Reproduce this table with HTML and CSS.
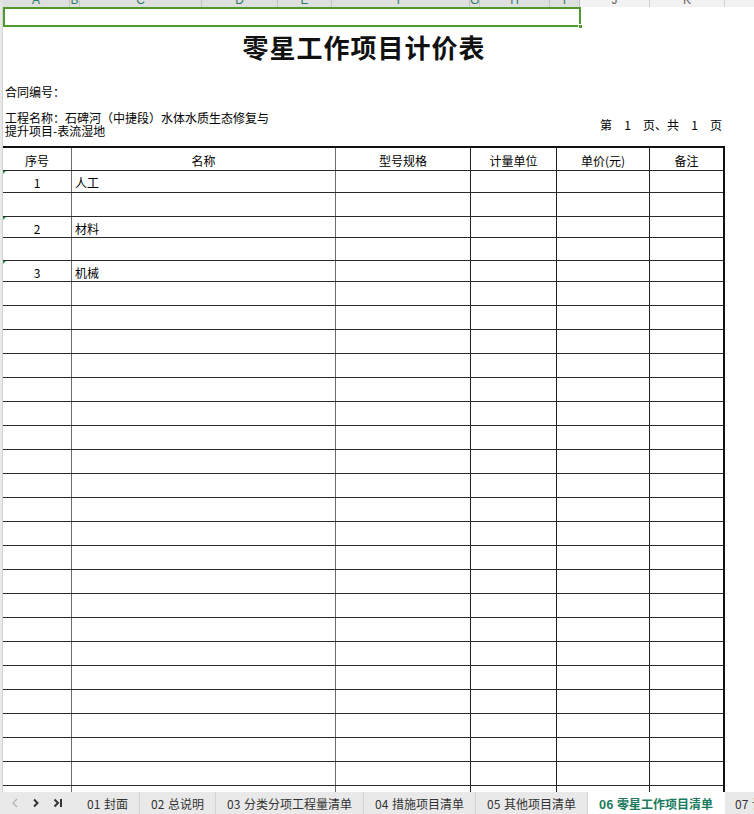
FILE: index.html
```html
<!DOCTYPE html>
<html lang="zh-CN">
<head>
<meta charset="utf-8">
<title>零星工作项目计价表</title>
<link rel="stylesheet" href="styles.css">
</head>
<body>
<div class="colhdr">
  <div class="corner"></div>
  <div class="ch sel c-a"><span>A</span></div>
  <div class="ch sel c-b"><span>B</span></div>
  <div class="ch sel c-c"><span>C</span></div>
  <div class="ch sel c-d"><span>D</span></div>
  <div class="ch sel c-e"><span>E</span></div>
  <div class="ch sel c-f"><span>F</span></div>
  <div class="ch sel c-g"><span>G</span></div>
  <div class="ch sel c-h"><span>H</span></div>
  <div class="ch sel c-i"><span>I</span></div>
  <div class="ch c-j"><span>J</span></div>
  <div class="ch c-k"><span>K</span></div>
  <div class="ch c-l"><span>L</span></div>
</div>
<div class="sheet">
  <div class="rowhdr"></div>
  <div class="page">
    <div class="selrow"><div class="selbox"><span class="handle"></span></div></div>
    <h1 class="title">零星工作项目计价表</h1>
    <div class="contract">合同编号：</div>
    <div class="proj">
      <div class="projname">工程名称：石碑河（中捷段）水体水质生态修复与<br>提升项目-表流湿地</div>
      <div class="pageno">第<span class="pn">1</span>页、共<span class="pn">1</span>页</div>
    </div>
    <div class="grid">
      <div class="row hdr h23"><div class="cell c1 ctr">序号</div><div class="cell c2 ctr">名称</div><div class="cell ctr">型号规格</div><div class="cell ctr">计量单位</div><div class="cell ctr">单价(元)</div><div class="cell ctr last">备注</div></div>
      <div class="row h22"><div class="cell c1 ctr mark">1</div><div class="cell c2 txt">人工</div><div class="cell"></div><div class="cell"></div><div class="cell"></div><div class="cell last"></div></div>
      <div class="row h24"><div class="cell c1"></div><div class="cell c2"></div><div class="cell"></div><div class="cell"></div><div class="cell"></div><div class="cell last"></div></div>
      <div class="row h21"><div class="cell c1 ctr mark">2</div><div class="cell c2 txt">材料</div><div class="cell"></div><div class="cell"></div><div class="cell"></div><div class="cell last"></div></div>
      <div class="row h23"><div class="cell c1"></div><div class="cell c2"></div><div class="cell"></div><div class="cell"></div><div class="cell"></div><div class="cell last"></div></div>
      <div class="row h21"><div class="cell c1 ctr mark">3</div><div class="cell c2 txt">机械</div><div class="cell"></div><div class="cell"></div><div class="cell"></div><div class="cell last"></div></div>
      <div class="row h24"><div class="cell c1"></div><div class="cell c2"></div><div class="cell"></div><div class="cell"></div><div class="cell"></div><div class="cell last"></div></div>
      <div class="row h24"><div class="cell c1"></div><div class="cell c2"></div><div class="cell"></div><div class="cell"></div><div class="cell"></div><div class="cell last"></div></div>
      <div class="row h24"><div class="cell c1"></div><div class="cell c2"></div><div class="cell"></div><div class="cell"></div><div class="cell"></div><div class="cell last"></div></div>
      <div class="row h24"><div class="cell c1"></div><div class="cell c2"></div><div class="cell"></div><div class="cell"></div><div class="cell"></div><div class="cell last"></div></div>
      <div class="row h24"><div class="cell c1"></div><div class="cell c2"></div><div class="cell"></div><div class="cell"></div><div class="cell"></div><div class="cell last"></div></div>
      <div class="row h24"><div class="cell c1"></div><div class="cell c2"></div><div class="cell"></div><div class="cell"></div><div class="cell"></div><div class="cell last"></div></div>
      <div class="row h24"><div class="cell c1"></div><div class="cell c2"></div><div class="cell"></div><div class="cell"></div><div class="cell"></div><div class="cell last"></div></div>
      <div class="row h24"><div class="cell c1"></div><div class="cell c2"></div><div class="cell"></div><div class="cell"></div><div class="cell"></div><div class="cell last"></div></div>
      <div class="row h24"><div class="cell c1"></div><div class="cell c2"></div><div class="cell"></div><div class="cell"></div><div class="cell"></div><div class="cell last"></div></div>
      <div class="row h24"><div class="cell c1"></div><div class="cell c2"></div><div class="cell"></div><div class="cell"></div><div class="cell"></div><div class="cell last"></div></div>
      <div class="row h24"><div class="cell c1"></div><div class="cell c2"></div><div class="cell"></div><div class="cell"></div><div class="cell"></div><div class="cell last"></div></div>
      <div class="row h24"><div class="cell c1"></div><div class="cell c2"></div><div class="cell"></div><div class="cell"></div><div class="cell"></div><div class="cell last"></div></div>
      <div class="row h24"><div class="cell c1"></div><div class="cell c2"></div><div class="cell"></div><div class="cell"></div><div class="cell"></div><div class="cell last"></div></div>
      <div class="row h24"><div class="cell c1"></div><div class="cell c2"></div><div class="cell"></div><div class="cell"></div><div class="cell"></div><div class="cell last"></div></div>
      <div class="row h24"><div class="cell c1"></div><div class="cell c2"></div><div class="cell"></div><div class="cell"></div><div class="cell"></div><div class="cell last"></div></div>
      <div class="row h24"><div class="cell c1"></div><div class="cell c2"></div><div class="cell"></div><div class="cell"></div><div class="cell"></div><div class="cell last"></div></div>
      <div class="row h24"><div class="cell c1"></div><div class="cell c2"></div><div class="cell"></div><div class="cell"></div><div class="cell"></div><div class="cell last"></div></div>
      <div class="row h24"><div class="cell c1"></div><div class="cell c2"></div><div class="cell"></div><div class="cell"></div><div class="cell"></div><div class="cell last"></div></div>
      <div class="row h24"><div class="cell c1"></div><div class="cell c2"></div><div class="cell"></div><div class="cell"></div><div class="cell"></div><div class="cell last"></div></div>
      <div class="row h24"><div class="cell c1"></div><div class="cell c2"></div><div class="cell"></div><div class="cell"></div><div class="cell"></div><div class="cell last"></div></div>
      <div class="row h24"><div class="cell c1"></div><div class="cell c2"></div><div class="cell"></div><div class="cell"></div><div class="cell"></div><div class="cell last"></div></div>
      <div class="row h24"><div class="cell c1"></div><div class="cell c2"></div><div class="cell"></div><div class="cell"></div><div class="cell"></div><div class="cell last"></div></div>
    </div>
  </div>
</div>
<div class="tabs">
  <div class="nav">
    <svg class="ico dis" width="8" height="10" viewBox="0 0 8 10"><path d="M6 1 L2 5 L6 9" fill="none" stroke="currentColor" stroke-width="1.4"/></svg>
    <svg class="ico" width="8" height="10" viewBox="0 0 8 10"><path d="M2 1.5 L5.5 5 L2 8.5" fill="none" stroke="currentColor" stroke-width="2"/></svg>
    <svg class="ico" width="10" height="10" viewBox="0 0 10 10"><path d="M1.5 1.5 L5 5 L1.5 8.5" fill="none" stroke="currentColor" stroke-width="2"/><path d="M8 1 V9" stroke="currentColor" stroke-width="2"/></svg>
  </div>
  <div class="tab">01 封面</div>
  <div class="tab">02 总说明</div>
  <div class="tab">03 分类分项工程量清单</div>
  <div class="tab">04 措施项目清单</div>
  <div class="tab">05 其他项目清单</div>
  <div class="tab active">06 零星工作项目清单</div>
  <div class="tab next">07 计日工表</div>
</div>
</body>
</html>
```

FILE: styles.css
```css
* { box-sizing: border-box; }
html, body { margin: 0; padding: 0; }
body {
  width: 754px;
  height: 814px;
  overflow: hidden;
  background: #fff;
  font-family: "Noto Sans CJK SC", "Liberation Sans", sans-serif;
  font-size: 12px;
  color: #000;
}

/* column header strip */
.colhdr {
  display: flex;
  height: 7px;
  overflow: hidden;
  background: #f0f0f0;
}
.corner { width: 3px; flex: none; background: #e4e4e4; }
.ch {
  flex: none;
  height: 7px;
  border-right: 1px solid #d2d2d2;
  background: #f2f2f2;
  color: #666;
  font-family: "Liberation Sans", sans-serif;
  font-size: 12px;
  text-align: center;
}
.ch span { display: block; line-height: 14px; margin-top: -7px; }
.ch.sel { background: #dfdfdf; color: #2b7c6b; border-right-color: #c4c4c4; }
.c-a { width: 67px; }
.c-b { width: 10px; }
.c-c { width: 122px; }
.c-d { width: 76px; }
.c-e { width: 54px; }
.c-f { width: 138px; }
.c-g { width: 10px; }
.c-h { width: 70px; }
.c-i { width: 30px; }
.c-j { width: 70px; }
.c-k { width: 75px; }
.c-l { width: 70px; }

/* sheet body */
.sheet {
  display: flex;
  height: 785px;
  overflow: hidden;
}
.rowhdr {
  width: 3px;
  flex: none;
  background: #e9e9e9;
  border-right: 1px solid #d3d3d3;
}
.page {
  width: 722px;
  flex: none;
}

.selrow { height: 20px; }
.selbox {
  position: relative;
  width: 578px;
  height: 20px;
  border: 2px solid #4e9a2c;
}
.handle {
  position: absolute;
  right: -4px;
  bottom: -4px;
  width: 5px;
  height: 5px;
  background: #4e9a2c;
  border: 1px solid #fff;
}

.title {
  margin: 0;
  height: 40px;
  line-height: 40px;
  text-align: center;
  font-size: 26px;
  font-weight: 700;
  letter-spacing: 1px;
  color: #111;
}

.contract {
  padding: 18px 0 0 2px;
  line-height: 14px;
  height: 32px;
}

.proj {
  display: flex;
  justify-content: space-between;
  align-items: center;
  padding: 12px 0 0 2px;
  height: 47px;
}
.projname { line-height: 13px; align-self: flex-start; }
.pageno { padding-right: 3px; margin-top: -9px; line-height: 13px; }
.pn { display: inline-block; width: 31px; text-align: center; }

/* table grid */
.grid {
  border-top: 2px solid #111;
  border-right: 2px solid #111;
}
.row {
  display: grid;
  grid-template-columns: 69px 264px 135px 86px 93px 73px;
  border-bottom: 1px solid #2a2a2a;
}
.h21 { height: 21px; }
.h22 { height: 22px; }
.h23 { height: 23px; }
.h24 { height: 24px; }
.cell {
  border-right: 1px solid #222;
  display: flex;
  align-items: center;
  padding-top: 2px;
  position: relative;
}
.cell.c1, .cell.c2 { border-right-color: #6e6e6e; }
.cell.last { border-right: none; }
.ctr { justify-content: center; }
.txt { padding-left: 3px; }
.mark::before {
  content: "";
  position: absolute;
  left: 0;
  top: 0;
  border-top: 3px solid #1f9a3a;
  border-right: 3px solid transparent;
}

/* sheet tabs */
.tabs {
  display: flex;
  height: 22px;
  background: #e9e9e9;
  font-size: 12px;
  color: #333;
  white-space: nowrap;
  word-spacing: 1px;
}
.nav {
  width: 76px;
  flex: none;
  display: flex;
  align-items: center;
  gap: 13px;
  padding-left: 11px;
  color: #333;
}
.ico.dis { color: #b4b4b4; }
.tab {
  flex: none;
  display: flex;
  align-items: center;
  padding: 0 11px;
  border-right: 1px solid #d2d2d2;
}
.tab.active {
  background: #fff;
  color: #1b7a5c;
  font-weight: 700;
  padding: 0 12px 0 11px;
  border-right: none;
}
.tab.next { border-right: none; padding-left: 10px; }
```
